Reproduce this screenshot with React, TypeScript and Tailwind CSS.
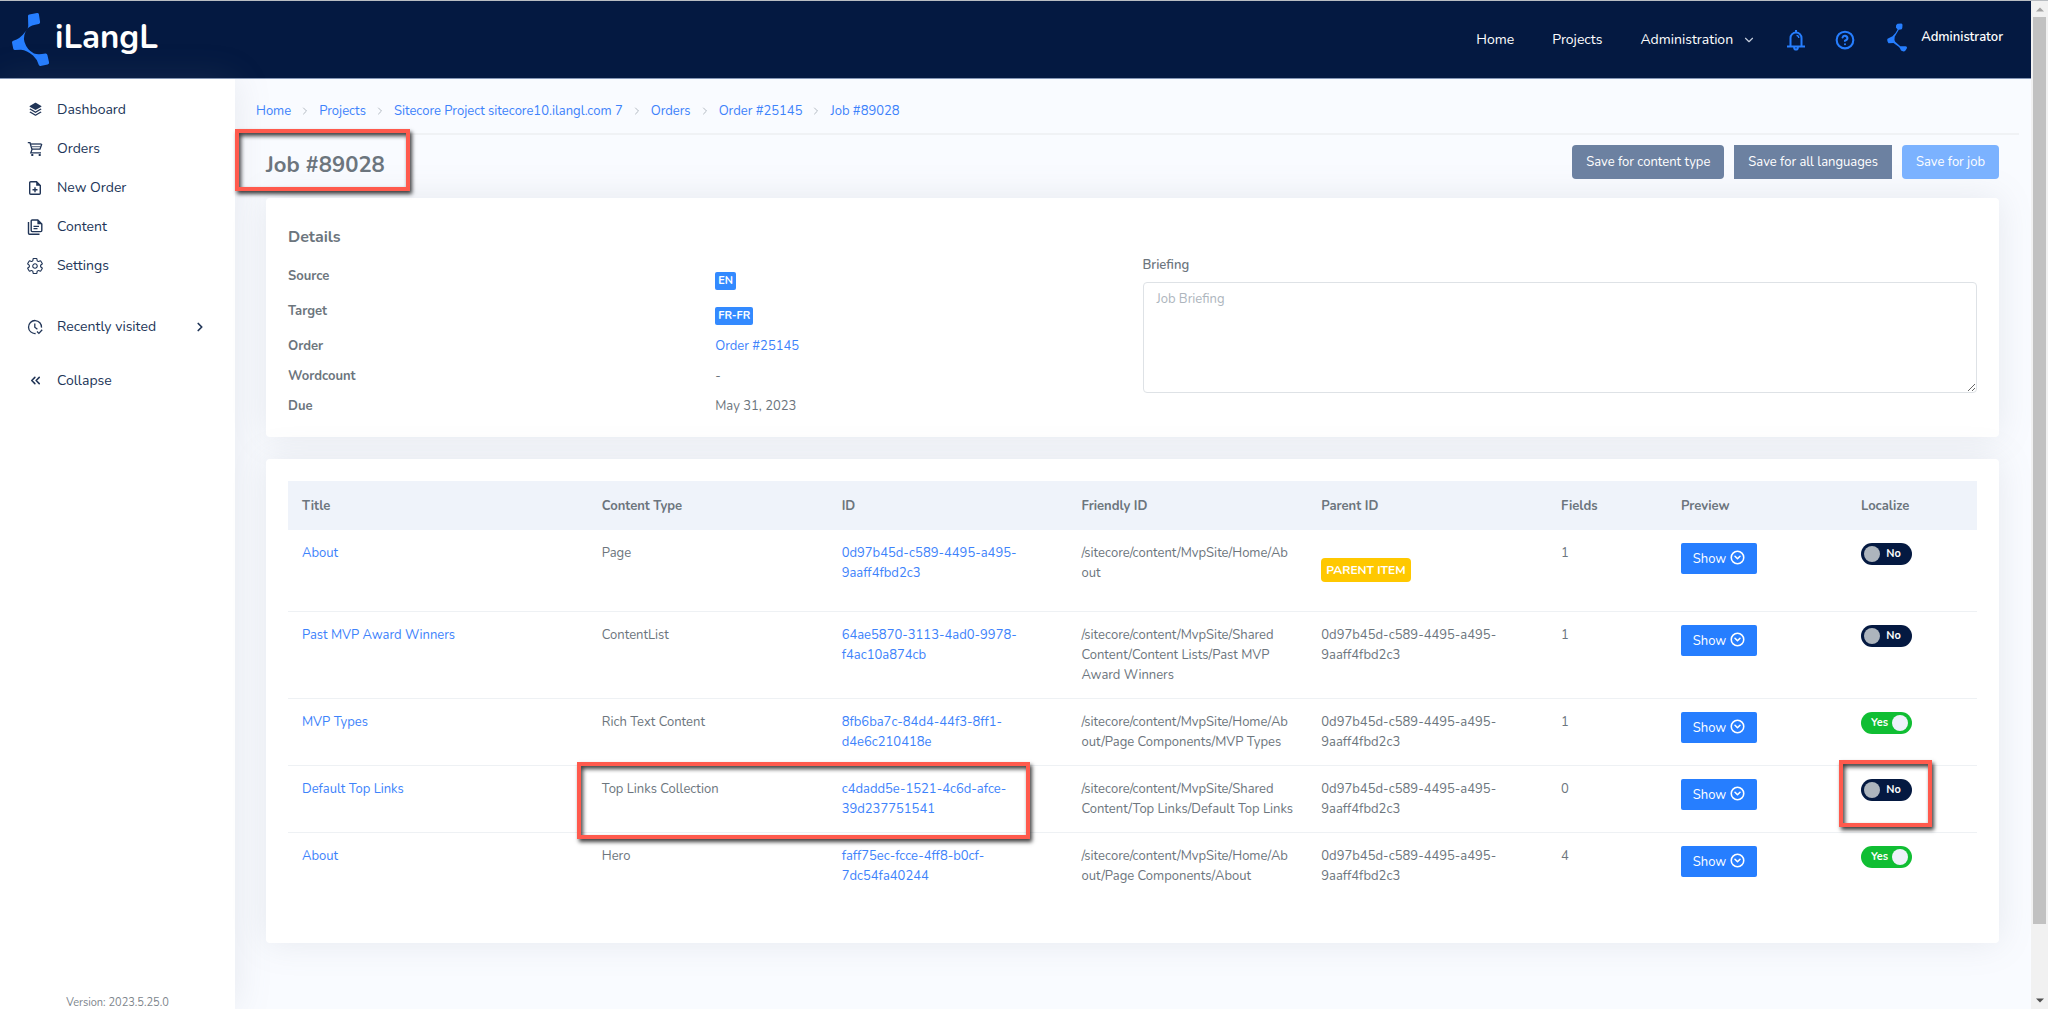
import type { ReactNode } from "react";
import { ChevronDown, ChevronRight, ChevronsLeft, CircleChevronDown, CircleQuestionMark } from "lucide-react";
import { RiStackFill } from "react-icons/ri";
import { IoSettingsOutline } from "react-icons/io5";

const CartIcon = () => (
  <svg viewBox="0 0 16 16" className="size-4" fill="none" stroke="currentColor" strokeWidth="1.3">
    <path d="M.8 1.700h2.200l2 6.800-1.200 3.300H14" />
    <path d="M3.700 3h10.700" />
    <path d="M5 8.200h8L14.800 3" />
    <path d="M5 5.700h8.500" strokeWidth="0.8" />
    <path d="M4.300 13h2v2h-2zM11.700 13h2v2h-2z" fill="currentColor" stroke="none" />
  </svg>
);

const FileAddIcon = () => (
  <svg viewBox="0 0 16 16" className="size-4" fill="none" stroke="currentColor" strokeWidth="1.4">
    <path d="M9.5 1.7H3.7a1 1 0 0 0-1 1v10.6a1 1 0 0 0 1 1h8.6a1 1 0 0 0 1-1V5.5z" />
    <path d="M9.2 1.5v4.3h4.3z" fill="currentColor" stroke="none" />
    <path d="M8 7.2v5M5.5 9.7h5" />
  </svg>
);

const DocumentsIcon = () => (
  <svg viewBox="0 0 16 16" className="size-4" fill="none" stroke="currentColor" strokeWidth="1.4">
    <path d="M10.8 1H5.2a1 1 0 0 0-1 1v9.6a1 1 0 0 0 1 1h8.600a1 1 0 0 0 1-1V5z" />
    <path d="M10.4.8v4.500H15z" fill="currentColor" stroke="none" />
    <path d="M1.500 3v11.200a1 1 0 0 0 1 1H12.500" />
    <path d="M6.500 7.300h5.500M6.500 9.700h4" strokeWidth="1.200" />
  </svg>
);

const RecentIcon = () => (
  <svg viewBox="0 0 16 16" className="size-4" fill="none" stroke="currentColor" strokeWidth="1.300">
    <path d="M14.500 8.600A6.500 6.500 0 1 0 8.600 14.500" />
    <path d="M7.800 4.500v3.800l2.600 2" />
    <path d="M10 12.500l1.900 1.900 3.300-3.600" />
  </svg>
);

const BellIcon = () => (
  <svg viewBox="0 0 20 22" className="h-[22px] w-5" fill="none" stroke="currentColor" strokeWidth="2">
    <path d="M1 17.500h18" />
    <path d="M4.500 17.500V9a5.500 5.500 0 0 1 11 0v8.500" />
    <path d="M10 3.500V1" />
    <path d="M8.200 18v.8a1.800 1.800 0 0 0 3.600 0V18" />
    <path d="M10.500 6.300a2.700 2.700 0 0 1 2.300 2.700" strokeWidth="1.300" />
  </svg>
);

const LogoMark = () => (
  <svg viewBox="11 12 39 55" className="h-[55px] w-[39px]" fill="#267eff">
    <path d="M28 16.200Q27.800 14.800 29.300 14.500L37 13Q38.600 12.800 38.900 14.300L40.100 22Q40.300 23.600 38.700 24Q31 25 28 28Q22.500 35 24.500 42Q27 50 34 53.500Q38 55 45.500 53.500Q47 53.300 47.400 55L49.100 62.500Q49.300 64 47.600 64.400L40.500 65.900Q39 66.100 38.600 64.600Q37 59 33 55.500Q27 50.500 21 49.800L15 50Q13.500 50 13.200 48.500L12 42.500Q11.800 41.200 13.300 40.800Q20 39 25.500 31.500Q28.800 28 28.200 24Z" />
  </svg>
);

const AvatarMark = () => (
  <svg viewBox="0 0 21 29" className="h-[29px] w-[21px]" fill="#267eff">
    <path d="M10.500.8 14.300.5Q15.500.5 15.500 2L15.300 5Q15 6.600 13.500 6.600L11.800 6.800 7.700 13.700Q7 17 8.200 18.800L13.300 23.200 18.500 23.300Q20.300 23.500 20 25L18.700 27.200Q17.500 28.700 15.800 28.300L14 27.500Q13.200 25 12 23.900L6.500 20 1.500 20.300Q.2 18.500.2 16.800.3 15.500 1.500 15.200L5.500 13.200Q9 10 10.600 6.400L8.900 4.500Q8.700 1.500 10.500.8Z" />
  </svg>
);

const Arrow = ({ up = false }: { up?: boolean }) => (
  <svg viewBox="0 0 8 5" className={up ? "h-[5px] w-2 text-[#a3a3a3]" : "h-[5px] w-2 text-[#505050]"} fill="currentColor">
    <path d={up ? "M0 4.500 4 .5 8 4.500z" : "M0 .5 4 4.500 8 .5z"} />
  </svg>
);

const Highlight = ({ className }: { className: string }) => (
  <span
    aria-hidden
    className={`pointer-events-none absolute z-20 border-4 border-[#ff5a4d] shadow-[2px_3px_4px_rgba(0,0,0,0.75),inset_2px_3px_4px_rgba(0,0,0,0.75)] ${className}`}
  />
);

function NavRow({ icon, label, trailing }: { icon: ReactNode; label: string; trailing?: ReactNode }) {
  return (
    <a href="#" className="flex h-[39px] items-center pr-7 pl-[27px] text-[14px]">
      <span className="mr-[14px] flex w-4 justify-center">{icon}</span>
      {label}
      {trailing && <span className="ml-auto">{trailing}</span>}
    </a>
  );
}

function Toggle({ on, title }: { on: boolean; title: string }) {
  return (
    <label className="relative block h-[22px] w-[51px] cursor-pointer text-[11px] font-bold text-white">
      <input type="checkbox" defaultChecked={on} aria-label={`Localize ${title}`} className="peer sr-only" />
      <span className="flex h-full items-center rounded-full bg-[#041941] pr-[11px] pl-[3px] peer-checked:hidden">
        <span className="size-4 rounded-full bg-[#adb5bd]" />
        <span className="ml-auto">No</span>
      </span>
      <span className="hidden h-full items-center rounded-full bg-[#10be33] pr-[4px] pl-[10px] peer-checked:flex">
        <span>Yes</span>
        <span className="ml-auto size-4 rounded-full bg-[#eef2fa]" />
      </span>
    </label>
  );
}

const crumbs = ["Home", "Projects", "Sitecore Project sitecore10.ilangl.com 7", "Orders", "Order #25145", "Job #89028"];

const parent = "0d97b45d-c589-4495-a495-9aaff4fbd2c3";

type Row = { title: string; type: string; id: string; path: string; parent?: string; fields: number; on: boolean; marked?: boolean };

const rows: Row[] = [
  { title: "About", type: "Page", id: parent, path: "/sitecore/content/MvpSite/Home/Ab\nout", fields: 1, on: false },
  { title: "Past MVP Award Winners", type: "ContentList", id: "64ae5870-3113-4ad0-9978-f4ac10a874cb", path: "/sitecore/content/MvpSite/Shared\nContent/Content Lists/Past MVP\nAward Winners", parent, fields: 1, on: false },
  { title: "MVP Types", type: "Rich Text Content", id: "8fb6ba7c-84d4-44f3-8ff1-d4e6c210418e", path: "/sitecore/content/MvpSite/Home/Ab\nout/Page Components/MVP Types", parent, fields: 1, on: true },
  { title: "Default Top Links", type: "Top Links Collection", id: "c4dadd5e-1521-4c6d-afce-39d237751541", path: "/sitecore/content/MvpSite/Shared\nContent/Top Links/Default Top Links", parent, fields: 0, on: false, marked: true },
  { title: "About", type: "Hero", id: "faff75ec-fcce-4ff8-b0cf-7dc54fa40244", path: "/sitecore/content/MvpSite/Home/Ab\nout/Page Components/About", parent, fields: 4, on: true },
];

const link = "text-[#3d82fb]";
const card = "rounded bg-white shadow-[0_0_35px_0_rgba(120,126,138,0.15)]";
const badge = "block w-fit rounded-xs bg-[#338aff] px-[3px] text-[11px] leading-[18px] font-bold text-white";

export default function App() {
  return (
    <div className="flex min-h-screen bg-[#f9fbff] font-['Nunito','Lato','Open_Sans',sans-serif] text-[13px] leading-5 text-[#6c757d]">
      <div className="flex min-w-0 flex-1 flex-col overflow-hidden">
        <header className="flex h-[79px] items-center border-t border-b border-t-[#b9bdc2] border-b-[#8496b5] bg-[#041941] pr-[28px] pl-[11px] text-white">
          <a href="#" className="flex items-center">
            <LogoMark />
            <span className="mb-1 ml-[5px] text-[33px] leading-10 font-bold">iLangL</span>
          </a>
          <nav className="ml-auto flex items-center text-[14px]">
            <a href="#">Home</a>
            <a href="#" className="ml-[38px]">Projects</a>
            <button type="button" className="ml-[38px] flex items-center gap-[9px]">
              Administration
              <ChevronDown className="size-[14px] text-[#c5cddc]" />
            </button>
            <button type="button" aria-label="Notifications" className="ml-[30px] text-[#267eff]"><BellIcon /></button>
            <button type="button" aria-label="Help" className="ml-[29px] text-[#267eff]">
              <CircleQuestionMark className="size-5" strokeWidth={2.5} />
            </button>
            <a href="#" className="mb-[5px] ml-8 flex items-center gap-[13px] text-[13px] font-semibold">
              <AvatarMark />
              Administrator
            </a>
          </nav>
        </header>

        <div className="flex flex-1">
          <aside className="flex w-[235px] shrink-0 flex-col bg-white text-[#213557] shadow-[0_0_35px_0_rgba(120,126,138,0.15)]">
            <nav className="pt-[11px]">
              <NavRow icon={<RiStackFill className="size-[15px]" />} label="Dashboard" />
              <NavRow icon={<CartIcon />} label="Orders" />
              <NavRow icon={<FileAddIcon />} label="New Order" />
              <NavRow icon={<DocumentsIcon />} label="Content" />
              <NavRow icon={<IoSettingsOutline className="size-[18px] shrink-0 stroke-[8]" />} label="Settings" />
              <div className="pt-[22px]">
                <NavRow icon={<RecentIcon />} label="Recently visited" trailing={<ChevronRight className="size-[14px]" strokeWidth={3} />} />
              </div>
              <div className="pt-[15px]">
                <NavRow icon={<ChevronsLeft className="size-[15px]" strokeWidth={2.5} />} label="Collapse" />
              </div>
            </nav>
            <p className="mt-auto text-center text-[11px] leading-3 text-[#7d858c]">Version: 2023.5.25.0</p>
          </aside>

          <main className="min-w-0 flex-1 pb-10">
            <nav aria-label="Breadcrumb" className="mr-3 ml-3 flex h-[56px] items-center gap-2 border-b-2 border-[#f0f2f5] pt-[10px] pl-[9px]">
              {crumbs.map((c, i) => (
                <span key={c} className="flex items-center gap-2">
                  {i > 0 && <ChevronRight className="size-3 text-[#b3bac2]" />}
                  <a href="#" className={link}>{c}</a>
                </span>
              ))}
            </nav>

            <div className="pr-8 pl-[31px]">
              <div className="relative flex h-[63px] items-start justify-between pt-[10px]">
                <h1 className="pt-2 text-[22px] leading-6 font-bold">Job #89028</h1>
                <Highlight className="-top-1.5 -left-[31px] h-[62px] w-[175px]" />
                <div className="flex gap-[10px] text-white">
                  <button type="button" className="h-[34px] rounded-sm bg-[#6c81a1] px-[14px]">Save for content type</button>
                  <button type="button" className="h-[34px] bg-[#6c81a1] px-[14px]">Save for all languages</button>
                  <button type="button" className="h-[34px] rounded-sm bg-[#7bb2ff] px-[14px]">Save for job</button>
                </div>
              </div>

              <section className={`grid grid-cols-2 gap-5 px-[22px] pt-[29px] pb-[11px] ${card}`}>
                <div>
                  <h2 className="text-[16px] font-bold">Details</h2>
                  <dl className="mt-[19px] grid grid-cols-2 gap-x-5">
                    <dt className="h-[35px] font-bold">Source</dt>
                    <dd className="pt-[6px]"><span className={badge}>EN</span></dd>
                    <dt className="h-[35px] font-bold">Target</dt>
                    <dd className="pt-[6px]"><span className={badge}>FR-FR</span></dd>
                    <dt className="h-[30px] font-bold">Order</dt>
                    <dd><a href="#" className={link}>Order #25145</a></dd>
                    <dt className="h-[30px] font-bold">Wordcount</dt>
                    <dd>-</dd>
                    <dt className="h-[30px] font-bold">Due</dt>
                    <dd>May 31, 2023</dd>
                  </dl>
                </div>
                <div className="pt-[28px]">
                  <label htmlFor="briefing" className="block font-semibold">Briefing</label>
                  <textarea
                    id="briefing"
                    placeholder="Job Briefing"
                    className="mt-[7px] block h-[111px] w-full rounded border border-[#dee2e6] px-[13px] py-[6px] placeholder:text-[#adb5bd]"
                  />
                </div>
              </section>

              <section className={`mt-[22px] px-[22px] pt-[22px] pb-[44px] ${card}`}>
                <table className="w-full table-fixed border-collapse text-left">
                  <colgroup>
                    <col className="w-[17.75%]" />
                    <col className="w-[14.2%]" />
                    <col className="w-[14.2%]" />
                    <col className="w-[14.2%]" />
                    <col className="w-[14.2%]" />
                    <col className="w-[7.1%]" />
                    <col className="w-[10.65%]" />
                    <col />
                  </colgroup>
                  <thead>
                    <tr className="h-[49px] bg-[#eff3fa]">
                      {["Title", "Content Type", "ID", "Friendly ID", "Parent ID", "Fields", "Preview", "Localize"].map((h) => (
                        <th key={h} scope="col" className="px-[14px] font-bold">{h}</th>
                      ))}
                    </tr>
                  </thead>
                  <tbody>
                    {rows.map((r) => (
                      <tr key={r.id} className="border-b border-[#eef1f4] align-top last:border-b-0">
                        <td className="px-[14px] py-[13px]"><a href="#" className={link}>{r.title}</a></td>
                        <td className="relative px-[14px] py-[13px]">
                          {r.type}
                          {r.marked && <Highlight className="-top-1 -left-[11px] h-[77px] w-[189%]" />}
                        </td>
                        <td className="px-[14px] py-[13px]"><a href="#" className={link}>{r.id}</a></td>
                        <td className="px-[14px] py-[13px] whitespace-pre">{r.path}</td>
                        <td className="px-[14px] py-[13px]">
                          {r.parent ?? (
                            <span className="mt-[15px] mb-[16px] block w-fit rounded bg-[#ffc800] px-[5px] text-[12px] leading-6 font-bold text-white">PARENT ITEM</span>
                          )}
                        </td>
                        <td className="px-[14px] py-[13px]">{r.fields}</td>
                        <td className="px-[14px] py-[13px]">
                          <button type="button" className="flex h-[31px] w-[76px] items-center justify-center gap-[4px] rounded-xs bg-[#267eff] text-white">
                            Show
                            <CircleChevronDown className="mb-[3px] size-[15px]" strokeWidth={2.5} />
                          </button>
                        </td>
                        <td className="relative px-[14px] py-[13px]">
                          <Toggle on={r.on} title={r.title} />
                          {r.marked && <Highlight className="-top-1.5 -left-2 h-[67px] w-[93px]" />}
                        </td>
                      </tr>
                    ))}
                  </tbody>
                </table>
              </section>
            </div>
          </main>
        </div>
      </div>

      <div aria-hidden className="flex w-[17px] shrink-0 flex-col items-center border-t border-[#b9bdc2] bg-[#f1f1f1]">
        <span className="flex h-4 items-center"><Arrow up /></span>
        <span className="w-[13px] flex-[907] bg-[#c1c1c1]" />
        <span className="flex-[68]" />
        <span className="flex h-[17px] items-center"><Arrow /></span>
      </div>
    </div>
  );
}
